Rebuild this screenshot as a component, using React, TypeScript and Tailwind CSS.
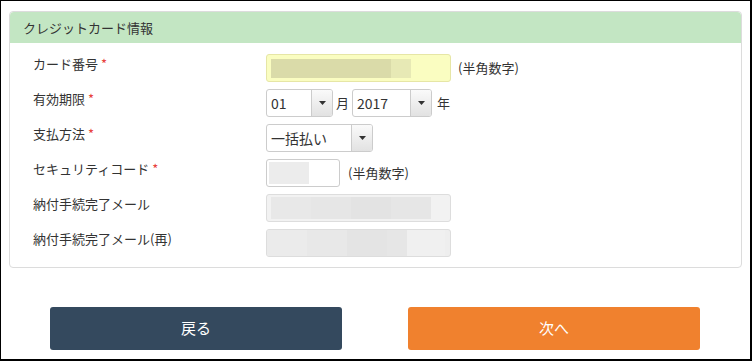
import React from 'react';

const font = { fontFamily: '"Noto Sans CJK JP", "Liberation Sans", sans-serif' };

const Label = ({ text, required }: { text: string; required?: boolean }) => (
    <div className="w-[233px] shrink-0 text-[13px] leading-[20px] text-[#333]">
        {text}
        {required && <span className="ml-[3px] text-[#e8413c]">*</span>}
    </div>
);

const Arrow = () => (
    <div className="flex h-full w-[21px] items-center justify-center border-l border-[#ccc] bg-gradient-to-b from-[#fafafa] to-[#e2e2e2]">
        <svg width="7" height="4" viewBox="0 0 7 4">
            <path d="M0 0 L7 0 L3.5 4 Z" fill="#333" />
        </svg>
    </div>
);

const Select = ({ value, width }: { value: string; width: string }) => (
    <div className={`flex h-[28px] items-center overflow-hidden rounded-[3px] border border-[#ccc] bg-white ${width}`}>
        <div className="flex-1 pl-[4px] text-[14px] text-[#333]">{value}</div>
        <Arrow />
    </div>
);

const App = () => {
    return (
        <div
            className="flex h-[361px] w-[752px] flex-col border-t border-l border-r-2 border-b-2 border-black bg-white"
            style={font}
        >
            <div className="ml-[8px] mt-[10px] w-[733px] rounded-[4px] border border-[#dcdcdc]">
                <div className="flex h-[31px] items-center rounded-t-[4px] bg-[#c3e6c3] pl-[13px] text-[13px] text-[#333]">
                    クレジットカード情報
                </div>
                <div className="flex flex-col gap-[7px] pl-[23px] pt-[11px] pb-[10px]">
                    <div className="flex items-start">
                        <Label text="カード番号" required />
                        <div className="flex h-[28px] w-[185px] items-center rounded-[3px] border border-[#e6e6a6] bg-[#fafdc1] px-[4px]">
                            <div className="h-[19px] w-[120px] bg-[#dadba9]" />
                            <div className="h-[19px] w-[20px] bg-[#e7e9b5]" />
                        </div>
                        <div className="ml-[7px] pt-[4px] text-[13px] text-[#333]">(半角数字)</div>
                    </div>
                    <div className="flex items-start">
                        <Label text="有効期限" required />
                        <Select value="01" width="w-[67px]" />
                        <div className="px-[3px] pt-[4px] text-[13px] text-[#333]">月</div>
                        <Select value="2017" width="w-[80px]" />
                        <div className="px-[5px] pt-[4px] text-[13px] text-[#333]">年</div>
                    </div>
                    <div className="flex items-start">
                        <Label text="支払方法" required />
                        <Select value="一括払い" width="w-[107px]" />
                    </div>
                    <div className="flex items-start">
                        <Label text="セキュリティコード" required />
                        <div className="flex h-[28px] w-[74px] items-center rounded-[3px] border border-[#ccc] bg-white px-[2px]">
                            <div className="h-[22px] w-[40px] bg-[#ececec]" />
                        </div>
                        <div className="ml-[8px] pt-[4px] text-[13px] text-[#333]">(半角数字)</div>
                    </div>
                    <div className="flex items-start">
                        <Label text="納付手続完了メール" />
                        <div className="flex h-[28px] w-[185px] items-center rounded-[3px] border border-[#ddd] bg-[#f2f2f2] px-[4px]">
                            <div className="h-[22px] w-[40px] bg-[#e8e8e8]" />
                            <div className="h-[22px] w-[40px] bg-[#e6e6e6]" />
                            <div className="h-[22px] w-[40px] bg-[#e3e3e3]" />
                            <div className="h-[22px] w-[40px] bg-[#e6e6e6]" />
                        </div>
                    </div>
                    <div className="flex items-start">
                        <Label text="納付手続完了メール(再)" />
                        <div className="flex h-[28px] w-[185px] items-center overflow-hidden rounded-[3px] border border-[#ddd] bg-[#eeeeee] pr-[4px]">
                            <div className="h-[26px] w-[40px] bg-[#ebebeb]" />
                            <div className="h-[26px] w-[40px] bg-[#e8e8e8]" />
                            <div className="h-[26px] w-[40px] bg-[#e4e4e4]" />
                            <div className="h-[26px] w-[20px] bg-[#e6e6e6]" />
                            <div className="h-[26px] w-[38px] bg-[#f0f0f0]" />
                        </div>
                    </div>
                </div>
            </div>
            <div className="mt-[39px] flex gap-[66px] pl-[49px]">
                <button className="flex h-[43px] w-[292px] items-center justify-center rounded-[3px] bg-[#34495e] text-[15px] text-white">
                    戻る
                </button>
                <button className="flex h-[43px] w-[292px] items-center justify-center rounded-[3px] bg-[#f0812e] text-[15px] text-white">
                    次へ
                </button>
            </div>
        </div>
    );
};

export default App;
